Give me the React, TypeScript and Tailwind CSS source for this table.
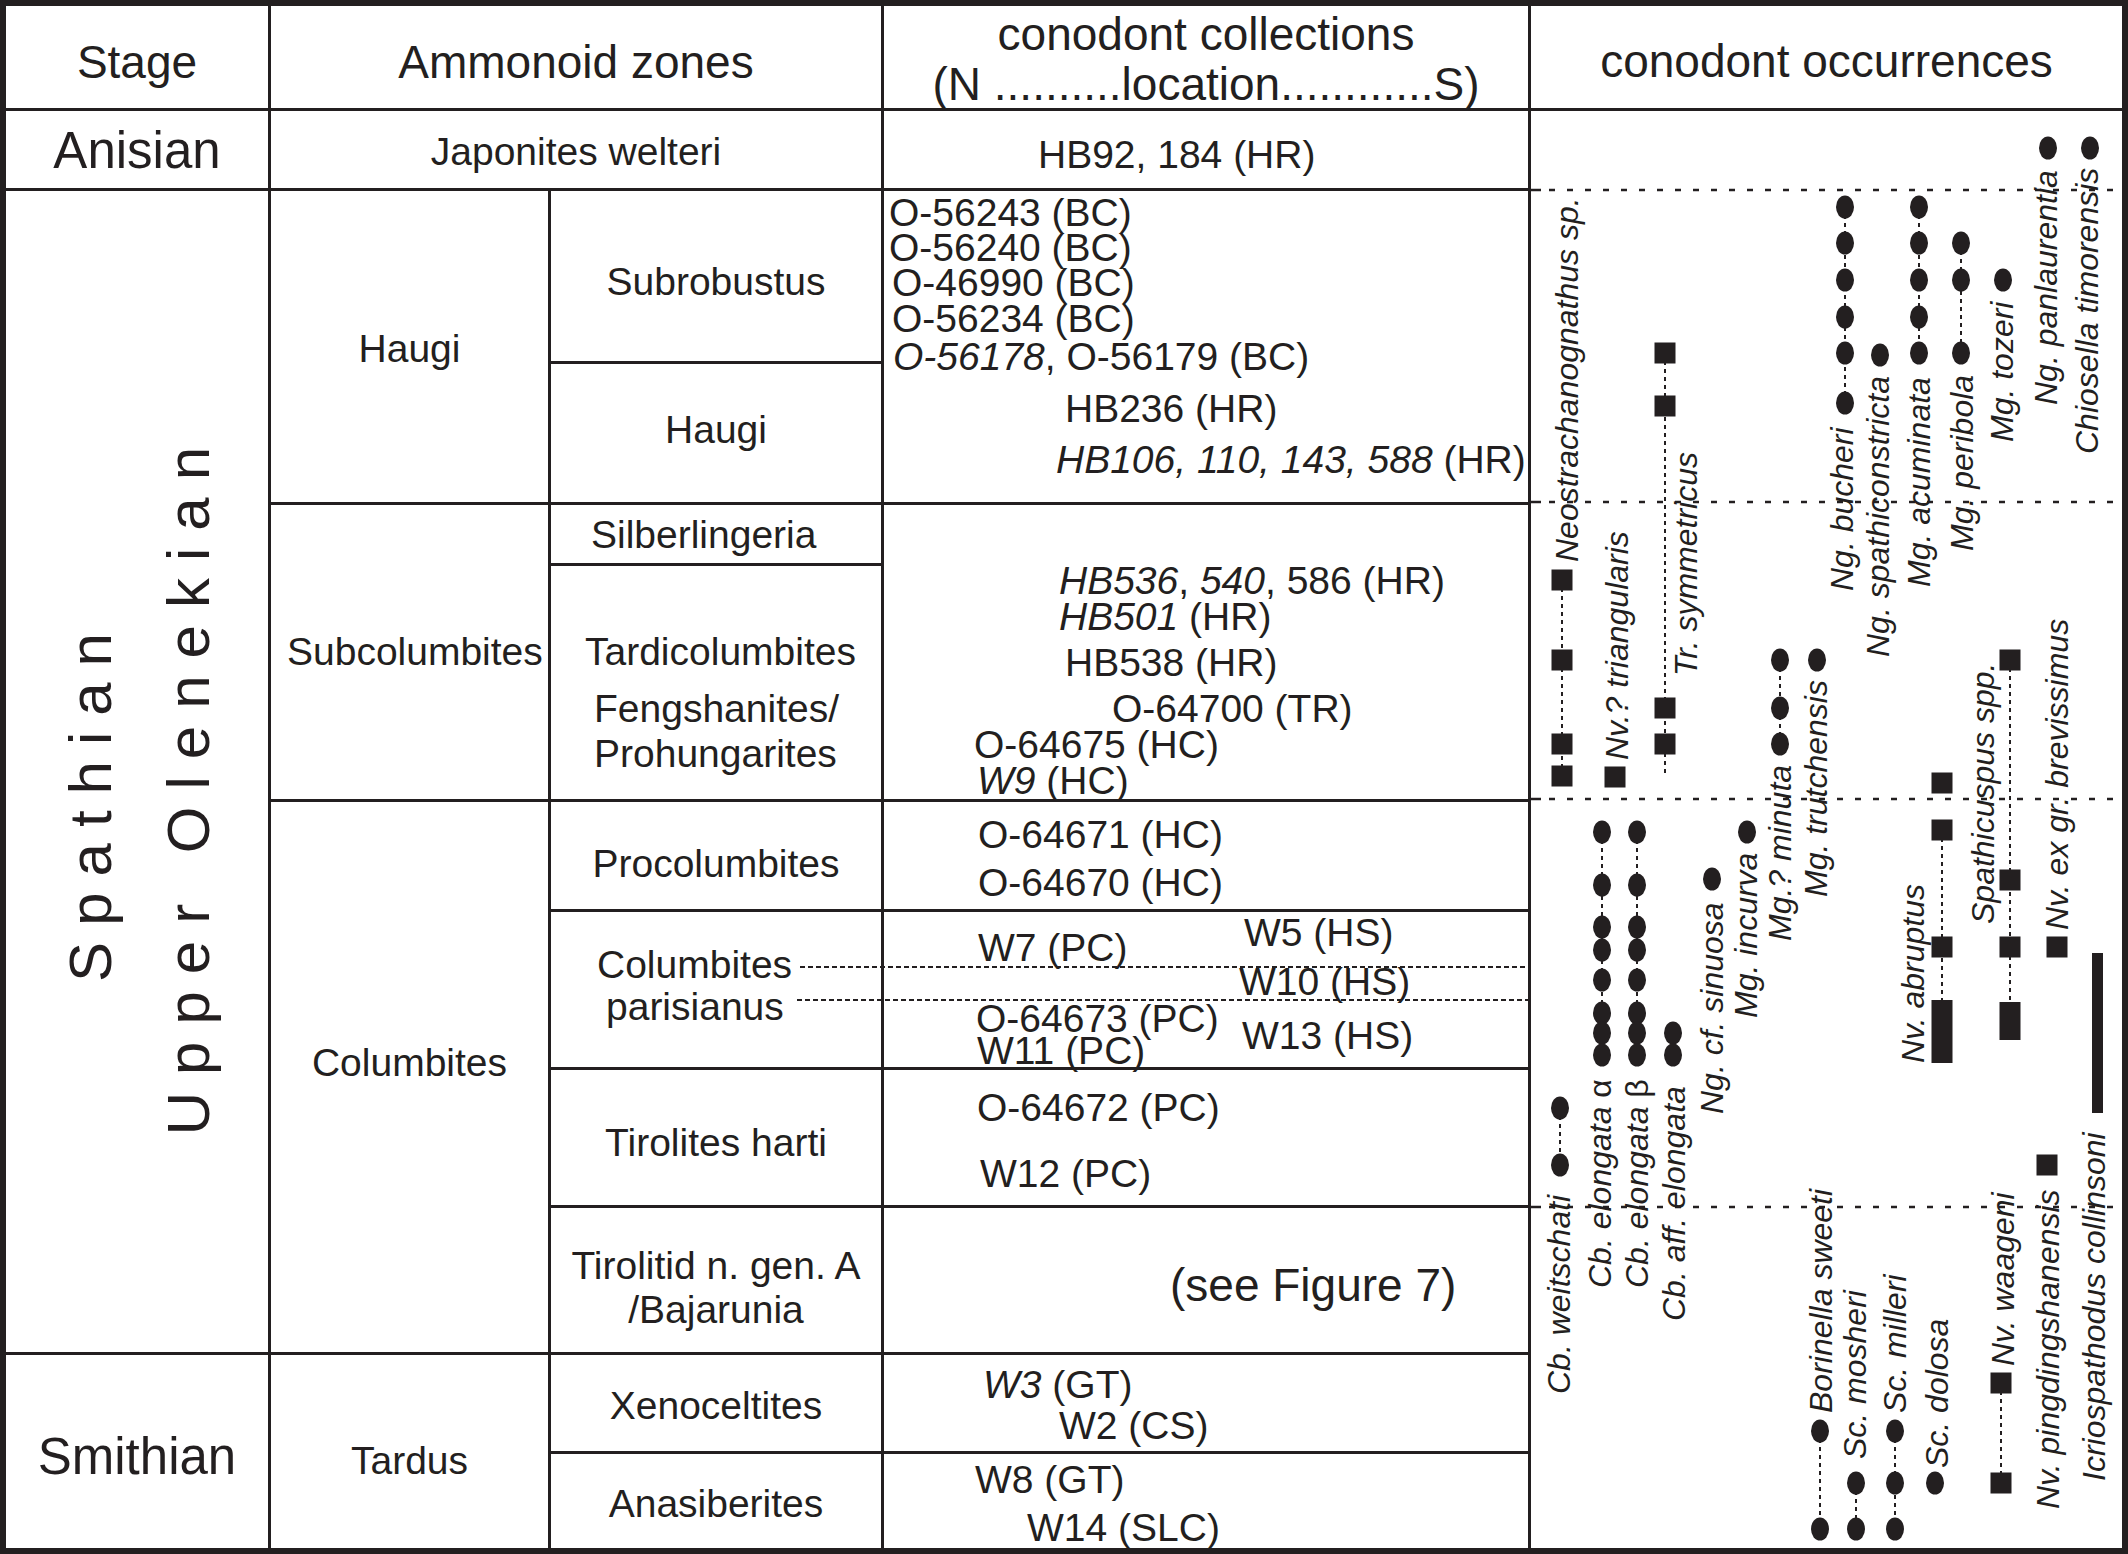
import type { ReactNode } from "react";

const INK = "#231f20";

// collection / zone text line, 39px type on a 36px line box
function Ln({ c, children }: { c: string; children: ReactNode }) {
  return <div className={"h-9 leading-9 whitespace-nowrap " + c}>{children}</div>;
}

// rotated species labels: baseline x, start (bottom) y
const labels: { t: ReactNode; x: number; y: number }[] = [
  { t: "Neostrachanognathus sp.", x: 1578, y: 562 },
  { t: "Nv.? triangularis", x: 1628, y: 760 },
  { t: "Tr. symmetricus", x: 1697, y: 676 },
  { t: "Ng. bucheri", x: 1853, y: 591 },
  { t: "Ng. spathiconstricta", x: 1889, y: 657 },
  { t: "Mg. acuminata", x: 1930, y: 587 },
  { t: "Mg. peribola", x: 1973, y: 551 },
  { t: "Mg. tozeri", x: 2013, y: 442 },
  { t: "Ng. panlaurentia", x: 2057, y: 405 },
  { t: "Chiosella timorensis", x: 2098, y: 454 },
  { t: "Cb. weitschati", x: 1570, y: 1394 },
  { t: <>Cb. elongata <tspan fontStyle="normal">α</tspan></>, x: 1611, y: 1288 },
  { t: <>Cb. elongata <tspan fontStyle="normal">β</tspan></>, x: 1648, y: 1288 },
  { t: "Cb. aff. elongata", x: 1685, y: 1321 },
  { t: "Ng. cf. sinuosa", x: 1723, y: 1114 },
  { t: "Mg. incurva", x: 1757, y: 1018 },
  { t: "Mg.? minuta", x: 1791, y: 941 },
  { t: "Mg. trutchensis", x: 1827, y: 897 },
  { t: "Nv. abruptus", x: 1924, y: 1063 },
  { t: "Spathicuspus spp.", x: 1994, y: 924 },
  { t: "Nv. ex gr. brevissimus", x: 2068, y: 930 },
  { t: "Icriospathodus collinsoni", x: 2105, y: 1481 },
  { t: "Nv. pingdingshanensis", x: 2059, y: 1509 },
  { t: "Nv. waageni", x: 2014, y: 1366 },
  { t: "Sc. dolosa", x: 1948, y: 1468 },
  { t: "Sc. milleri", x: 1906, y: 1413 },
  { t: "Sc. mosheri", x: 1866, y: 1459 },
  { t: "Borinella sweeti", x: 1832, y: 1413 },
];

const dashes: [number, number, number][] = [
  [1562, 580, 776],
  [1665, 353, 774],
  [1845, 207, 403],
  [1919, 207, 353],
  [1961, 243, 353],
  [1560, 1108, 1165],
  [1602, 832, 1055],
  [1637, 832, 1055],
  [1673, 1033, 1055],
  [1780, 660, 744],
  [1942, 830, 1000],
  [2010, 660, 1002],
  [2001, 1383, 1483],
  [1895, 1431, 1529],
  [1856, 1483, 1529],
  [1820, 1431, 1529],
];

const elong = [832, 885, 927, 950, 980, 1013, 1033, 1055];

const dots: [number, number[]][] = [
  [1845, [207, 243, 280, 317, 353, 403]],
  [1880, [355]],
  [1919, [207, 243, 280, 317, 353]],
  [1961, [243, 280, 353]],
  [2003, [280]],
  [2048, [148]],
  [2090, [148]],
  [1560, [1108, 1165]],
  [1602, elong],
  [1637, elong],
  [1673, [1033, 1055]],
  [1712, [879]],
  [1747, [832]],
  [1780, [660, 708, 744]],
  [1817, [660]],
  [1935, [1483]],
  [1895, [1431, 1483, 1529]],
  [1856, [1483, 1529]],
  [1820, [1431, 1529]],
];

const squares: [number, number[]][] = [
  [1562, [580, 660, 744, 776]],
  [1615, [777]],
  [1665, [353, 406, 708, 744]],
  [1942, [783, 830, 947]],
  [2010, [660, 880, 947]],
  [2057, [947]],
  [2047, [1165]],
  [2001, [1383, 1483]],
];

// x, y, w, h
const bars: [number, number, number, number][] = [
  [1931.5, 1000, 21, 63],
  [1999.5, 1002, 21, 38],
  [2092, 953, 11, 160],
];

function Occurrences() {
  return (
    <svg width={591} height={1437} viewBox="1531 111 591 1437" className="block">
      {[190, 502, 799, 1207].map((y) => (
        <g key={y}>
          <line x1={1529} x2={1541} y1={y} y2={y} stroke={INK} strokeWidth={2.5} />
          <line x1={1549} x2={2122} y1={y} y2={y} stroke={INK} strokeWidth={2.5} strokeDasharray="6 12" />
        </g>
      ))}
      {dashes.map(([x, a, b], i) => (
        <line key={i} x1={x} x2={x} y1={a} y2={b} stroke={INK} strokeWidth={2} strokeDasharray="4 4" />
      ))}
      {dots.map(([x, ys]) =>
        ys.map((y) => <ellipse key={x + "-" + y} cx={x} cy={y} rx={9} ry={11.5} fill={INK} />)
      )}
      {squares.map(([x, ys]) =>
        ys.map((y) => <rect key={x + "-" + y} x={x - 10.5} y={y - 10.5} width={21} height={21} fill={INK} />)
      )}
      {bars.map(([x, y, w, h]) => (
        <rect key={x} x={x} y={y} width={w} height={h} fill={INK} />
      ))}
      {labels.map((l, i) => (
        <text
          key={i}
          x={l.x}
          y={l.y}
          transform={`rotate(-90 ${l.x} ${l.y})`}
          fontSize={32}
          fontStyle="italic"
          fill={INK}
          fontFamily="'Liberation Sans', Arial, sans-serif"
        >
          {l.t}
        </text>
      ))}
    </svg>
  );
}

export default function App() {
  return (
    <div className="w-[2128px] h-[1554px] bg-white border-[6px] border-[#231f20] text-[#231f20] font-['Liberation_Sans',Arial,sans-serif]">
      <div className="grid grid-cols-[265px_280px_333px_647px_591px] grid-rows-[105px_80px_173px_141px_61px_236px_110px_158px_138px_147px_99px_94px]">
        {/* Header */}
        <div className="col-start-1 row-start-1 border-r-[3px] border-b-[3px] border-[#231f20] text-center text-[46px] leading-[46px] pt-[33px]">
          Stage
        </div>
        <div className="col-start-2 col-span-2 row-start-1 border-r-[3px] border-b-[3px] border-[#231f20] text-center text-[46px] leading-[46px] pt-[33px]">
          Ammonoid zones
        </div>
        <div className="col-start-4 row-start-1 border-r-[3px] border-b-[3px] border-[#231f20] text-center text-[46px] leading-[50px] pt-[3px] whitespace-nowrap">
          <div>conodont collections</div>
          <div>(N ..........location............S)</div>
        </div>
        <div className="col-start-5 row-start-1 border-b-[3px] border-[#231f20] text-center text-[46px] leading-[46px] pt-[32px]">
          conodont occurrences
        </div>

        {/* Anisian */}
        <div className="col-start-1 row-start-2 border-r-[3px] border-b-[3px] border-[#231f20] text-center text-[51px] leading-[51px] pt-[14px]">
          Anisian
        </div>
        <div className="col-start-2 col-span-2 row-start-2 border-r-[3px] border-b-[3px] border-[#231f20] text-center text-[39px] leading-[39px] pt-[21px]">
          Japonites welteri
        </div>
        <div className="col-start-4 row-start-2 border-r-[3px] border-b-[3px] border-[#231f20] text-[39px] leading-[39px] pt-[24px] pl-[154px] whitespace-nowrap">
          HB92, 184 (HR)
        </div>

        {/* Stage column */}
        <div className="col-start-1 row-start-3 row-span-8 border-r-[3px] border-b-[3px] border-[#231f20] flex items-start pl-[55px] gap-[38px] text-[60px] leading-[60px]">
          <div className="mt-[426px] w-[60px] tracking-[16px] whitespace-nowrap [writing-mode:vertical-rl] rotate-180">
            Spathian
          </div>
          <div className="mt-[239px] w-[60px] tracking-[17px] whitespace-nowrap [writing-mode:vertical-rl] rotate-180">
            Upper Olenekian
          </div>
        </div>
        <div className="col-start-1 row-start-11 row-span-2 border-r-[3px] border-[#231f20] text-center text-[51px] leading-[51px] pt-[76px]">
          Smithian
        </div>

        {/* Ammonoid zones */}
        <div className="col-start-2 row-start-3 row-span-2 border-r-[3px] border-b-[3px] border-[#231f20] text-center text-[39px] leading-[39px] pt-[138px]">
          Haugi
        </div>
        <div className="col-start-2 row-start-5 row-span-2 border-r-[3px] border-b-[3px] border-[#231f20] text-[39px] leading-[39px] pt-[127px] pl-[16px] whitespace-nowrap">
          Subcolumbites
        </div>
        <div className="col-start-2 row-start-7 row-span-4 border-r-[3px] border-b-[3px] border-[#231f20] text-center text-[39px] leading-[39px] pt-[241px]">
          Columbites
        </div>
        <div className="col-start-2 row-start-11 row-span-2 border-r-[3px] border-[#231f20] text-center text-[39px] leading-[39px] pt-[86px]">
          Tardus
        </div>

        {/* Subzones */}
        <div className="col-start-3 row-start-3 border-r-[3px] border-b-[3px] border-[#231f20] text-center text-[39px] leading-[39px] pt-[71px]">
          Subrobustus
        </div>
        <div className="col-start-3 row-start-4 border-r-[3px] border-b-[3px] border-[#231f20] text-center text-[39px] leading-[39px] pt-[46px]">
          Haugi
        </div>
        <div className="col-start-3 row-start-5 border-r-[3px] border-b-[3px] border-[#231f20] text-[39px] leading-[39px] pt-[10px] pl-[40px]">
          Silberlingeria
        </div>
        <div className="col-start-3 row-start-6 border-r-[3px] border-b-[3px] border-[#231f20] text-[39px] leading-[39px] flex flex-col">
          <div className="mt-[66px] ml-[34px]">Tardicolumbites</div>
          <div className="mt-[18px] ml-[43px]">Fengshanites/</div>
          <div className="mt-[6px] ml-[43px]">Prohungarites</div>
        </div>
        <div className="col-start-3 row-start-7 border-r-[3px] border-b-[3px] border-[#231f20] text-center text-[39px] leading-[39px] pt-[42px]">
          Procolumbites
        </div>
        <div className="col-start-3 row-start-8 border-r-[3px] border-b-[3px] border-[#231f20] text-[39px] leading-[39px] flex flex-col">
          <div className="mt-[33px] ml-[46px]">Columbites</div>
          <div className="mt-[3px] ml-[55px]">parisianus</div>
        </div>
        <div className="col-start-3 row-start-9 border-r-[3px] border-b-[3px] border-[#231f20] text-center text-[39px] leading-[39px] pt-[53px]">
          Tirolites harti
        </div>
        <div className="col-start-3 row-start-10 border-r-[3px] border-b-[3px] border-[#231f20] text-center text-[39px] leading-[39px] flex flex-col">
          <div className="mt-[38px]">Tirolitid n. gen. A</div>
          <div className="mt-[5px]">/Bajarunia</div>
        </div>
        <div className="col-start-3 row-start-11 border-r-[3px] border-b-[3px] border-[#231f20] text-center text-[39px] leading-[39px] pt-[31px]">
          Xenoceltites
        </div>
        <div className="col-start-3 row-start-12 border-r-[3px] border-[#231f20] text-center text-[39px] leading-[39px] pt-[30px]">
          Anasiberites
        </div>

        {/* Conodont collections */}
        <div className="col-start-4 row-start-3 row-span-2 border-r-[3px] border-b-[3px] border-[#231f20] text-[39px] flex flex-col">
          <Ln c="ml-[5px] mt-[4px]">O-56243 (BC)</Ln>
          <Ln c="ml-[5px] -mt-px">O-56240 (BC)</Ln>
          <Ln c="ml-[8px] -mt-px">O-46990 (BC)</Ln>
          <Ln c="ml-[8px] mt-0">O-56234 (BC)</Ln>
          <Ln c="ml-[9px] mt-[2px]">
            <span className="italic">O-56178</span>, O-56179 (BC)
          </Ln>
          <Ln c="ml-[181px] mt-[16px]">HB236 (HR)</Ln>
          <Ln c="ml-[172px] mt-[15px]">
            <span className="italic">HB106, 110, 143, 588</span> (HR)
          </Ln>
        </div>
        <div className="col-start-4 row-start-5 row-span-2 border-r-[3px] border-b-[3px] border-[#231f20] text-[39px] flex flex-col">
          <Ln c="ml-[175px] mt-[58px]">
            <span className="italic">HB536</span>, <span className="italic">540</span>, 586 (HR)
          </Ln>
          <Ln c="ml-[175px] mt-0">
            <span className="italic">HB501</span> (HR)
          </Ln>
          <Ln c="ml-[181px] mt-[10px]">HB538 (HR)</Ln>
          <Ln c="ml-[228px] mt-[10px]">O-64700 (TR)</Ln>
          <Ln c="ml-[90px] mt-0">O-64675 (HC)</Ln>
          <Ln c="ml-[93px] mt-0">
            <span className="italic">W9</span> (HC)
          </Ln>
        </div>
        <div className="col-start-4 row-start-7 border-r-[3px] border-b-[3px] border-[#231f20] text-[39px] flex flex-col">
          <Ln c="ml-[94px] mt-[15px]">O-64671 (HC)</Ln>
          <Ln c="ml-[94px] mt-[12px]">O-64670 (HC)</Ln>
        </div>
        <div className="col-start-4 row-start-8 border-r-[3px] border-b-[3px] border-[#231f20] text-[39px] flex">
          <div className="w-[355px] flex flex-col">
            <Ln c="ml-[94px] mt-[18px]">W7 (PC)</Ln>
            <Ln c="ml-[92px] mt-[35px]">O-64673 (PC)</Ln>
            <Ln c="ml-[93px] -mt-[4px]">W11 (PC)</Ln>
          </div>
          <div className="flex flex-col">
            <Ln c="ml-[5px] mt-[3px]">W5 (HS)</Ln>
            <Ln c="ml-0 mt-[13px]">W10 (HS)</Ln>
            <Ln c="ml-[3px] mt-[18px]">W13 (HS)</Ln>
          </div>
        </div>
        <div className="col-start-4 row-start-9 border-r-[3px] border-b-[3px] border-[#231f20] text-[39px] flex flex-col">
          <Ln c="ml-[93px] mt-[20px]">O-64672 (PC)</Ln>
          <Ln c="ml-[96px] mt-[30px]">W12 (PC)</Ln>
        </div>
        <div className="col-start-4 row-start-10 border-r-[3px] border-b-[3px] border-[#231f20] text-[46px] leading-[52px] pt-[51px] pl-[286px] whitespace-nowrap">
          (see Figure 7)
        </div>
        <div className="col-start-4 row-start-11 border-r-[3px] border-b-[3px] border-[#231f20] text-[39px] flex flex-col">
          <Ln c="ml-[99px] mt-[12px]">
            <span className="italic">W3</span> (GT)
          </Ln>
          <Ln c="ml-[175px] mt-[5px]">W2 (CS)</Ln>
        </div>
        <div className="col-start-4 row-start-12 border-r-[3px] border-[#231f20] text-[39px] flex flex-col">
          <Ln c="ml-[91px] mt-[8px]">W8 (GT)</Ln>
          <Ln c="ml-[143px] mt-[12px]">W14 (SLC)</Ln>
        </div>

        {/* dashed sub-boundaries in the Columbites parisianus zone */}
        <div className="col-start-3 col-span-2 row-start-8 relative pointer-events-none">
          <div className="absolute left-[249px] right-[2px] top-[54px] h-[2px] bg-[repeating-linear-gradient(90deg,#231f20_0_5px,transparent_5px_8px)]" />
          <div className="absolute left-[246px] right-[2px] top-[87px] h-[2px] bg-[repeating-linear-gradient(90deg,#231f20_0_5px,transparent_5px_8px)]" />
        </div>

        {/* Conodont occurrences chart */}
        <div className="col-start-5 row-start-2 row-span-11">
          <Occurrences />
        </div>
      </div>
    </div>
  );
}
